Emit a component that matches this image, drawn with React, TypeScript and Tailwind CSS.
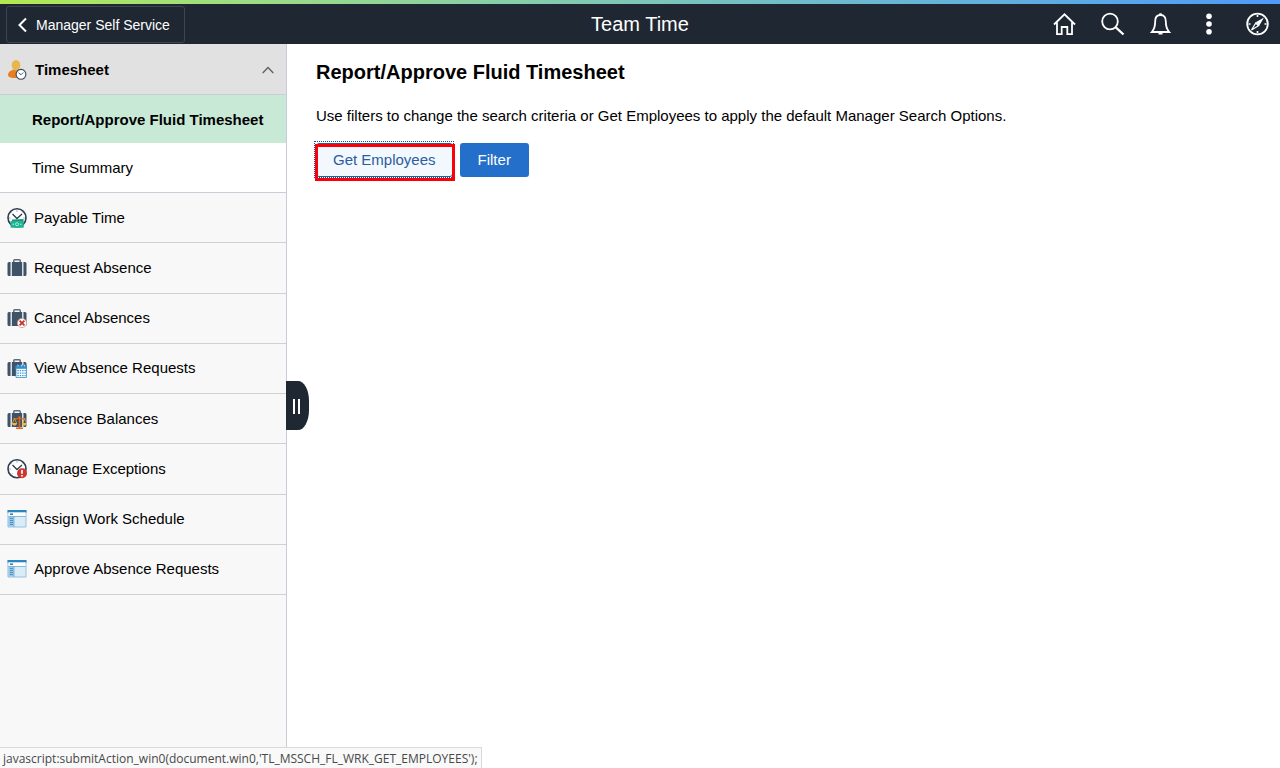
import { useState, type ReactNode } from "react"
import { clsx } from "clsx"

function PersonClockIcon() {
  return (
    <svg viewBox="0 0 20 20" className="h-5 w-5 shrink-0" aria-hidden="true">
      <path d="M1 15c0-3 3-5 6-5.500h4c2 .5 4 2 4 4v3c-2 1.200-4.500 1.500-7 1.500-3 0-7-.500-7-3z" fill="#e67e22" />
      <ellipse cx="9" cy="5.200" rx="4.300" ry="5.200" fill="#e8b54e" />
      <circle cx="14" cy="14.300" r="4.900" fill="#fff" stroke="#34495e" strokeWidth="1.100" />
      <path d="M11.500 12.800l2.500 2 2.300-2.300" fill="none" stroke="#34495e" strokeWidth="0.900" />
    </svg>
  )
}

function Clock() {
  return (
    <>
      <circle cx="10" cy="9.800" r="9" fill="#fff" stroke="#2c3e50" strokeWidth="1.600" />
      <path d="M5.500 6l4.500 4.500 5-4.500" fill="none" stroke="#2c3e50" strokeWidth="1.300" />
      <path d="M10 2.200v1.500M2.200 10h1.500M16.300 10h1.500M4.500 15.500l1-1M4.300 4.500l.7.700M15.700 4.500l-.7.700" stroke="#8a97a3" strokeWidth="0.900" />
    </>
  )
}

function PayableIcon() {
  return (
    <svg viewBox="0 0 20 20" className="h-5 w-5 shrink-0" aria-hidden="true">
      <Clock />
      <path d="M5 11.500l11.500-.5v8.500H4.500z" fill="#159c7f" />
      <path d="M3.500 13h13v6.500h-13z" fill="#1fb492" />
      <circle cx="10" cy="16.200" r="1.500" fill="none" stroke="#c9f2e6" strokeWidth="0.800" />
      <path d="M5.500 16.200h1.500M13 16.200h1.500" stroke="#c9f2e6" />
    </svg>
  )
}

function SuitcaseIcon({ children }: { children?: ReactNode }) {
  return (
    <svg viewBox="0 0 20 20" className="h-5 w-5 shrink-0" aria-hidden="true">
      <path d="M6.800 5V2.500q0-.8.8-.8h4.800q.8 0 .8.800V5" fill="none" stroke="#5d6d7e" strokeWidth="1.500" />
      <path d="M3.600 4v14H2Q.5 18 .5 16.500v-11Q.5 4 2 4zM16.400 4v14H18q1.500 0 1.500-1.500v-11Q19.500 4 18 4z" fill="#3f5367" />
      <path d="M5 4h10v14H5z" fill="#3f5367" />
      <path d="M4.300 4v14M15.700 4v14" stroke="#c3cbd3" strokeWidth="0.800" />
      {children}
    </svg>
  )
}

function CancelBadge() {
  return (
    <>
      <circle cx="15" cy="15" r="4.600" fill="#fff" stroke="#dd958f" strokeWidth="0.800" />
      <path d="M12.600 12.600l4.800 4.800M17.400 12.600l-4.800 4.800" stroke="#c8372d" strokeWidth="1.900" />
    </>
  )
}

function CalendarBadge() {
  return (
    <>
      <path d="M9 8h10.600v11.500H9z" fill="#fff" stroke="#2f8fd0" strokeWidth="0.800" />
      <path d="M8.600 7.500H20v3.300H8.600z" fill="#2f8fd0" />
      <path d="M11 6.500v2M14.300 6.500v2M17.600 6.500v2" stroke="#d6ebf8" strokeWidth="0.800" />
      <path d="M10.300 12.700h8.500M10.300 15.200h8.500M10.300 17.700h8.500" stroke="#3d9ad6" strokeWidth="1.300" strokeDasharray="1.500 0.900" />
    </>
  )
}

function ScalesBadge() {
  return (
    <>
      <path d="M12.500 7v12M9 19.200h7" stroke="#e0671c" strokeWidth="1.500" />
      <path d="M6.500 9.500q3 1.200 6-.8 3 2 6 .8" fill="none" stroke="#e0671c" strokeWidth="1.200" />
      <path d="M7.500 9.500l-2 4.500M7.500 9.500l2 4.500M17.500 9.500l-2 4.500M17.500 9.500l2 4.500" stroke="#e5ad3c" strokeWidth="0.800" />
      <path d="M4.800 14h5.400q-.5 2.800-2.700 2.800T4.800 14zM14.700 14h5.300q-.5 2.800-2.700 2.800T14.700 14z" fill="#efb73e" />
    </>
  )
}

function ExceptionIcon() {
  return (
    <svg viewBox="0 0 20 20" className="h-5 w-5 shrink-0" aria-hidden="true">
      <Clock />
      <circle cx="15" cy="14.300" r="5" fill="#d0342c" />
      <path d="M15 11v3.800M15 16v1.600" stroke="#fff" strokeWidth="1.700" />
    </svg>
  )
}

function WindowIcon() {
  return (
    <svg viewBox="0 0 20 20" className="h-5 w-5 shrink-0" aria-hidden="true">
      <path d="M1 1.500h18v16.500H1z" fill="#dcecf7" stroke="#8fc0e0" />
      <path d="M.5 1h19v2.500H.5z" fill="#2d85c0" />
      <path d="M1.500 3.500h17v3.500h-17z" fill="#fff" />
      <path d="M3 5.200h3" stroke="#2d85c0" strokeWidth="1.600" />
      <path d="M1.500 7.500h5.500v10H1.500z" fill="#9ac6e3" />
      <path d="M3 9.500h3M3 11.500h3M3 13.500h3M3 15.500h3" stroke="#3f8fc2" strokeWidth="0.900" />
      <path d="M7 7.500v10.500M1.500 7.500h17" stroke="#6badd6" strokeWidth="0.800" />
    </svg>
  )
}

const menuItems = [
  { label: "Payable Time", icon: <PayableIcon /> },
  { label: "Request Absence", icon: <SuitcaseIcon /> },
  { label: "Cancel Absences", icon: <SuitcaseIcon><CancelBadge /></SuitcaseIcon> },
  { label: "View Absence Requests", icon: <SuitcaseIcon><CalendarBadge /></SuitcaseIcon> },
  { label: "Absence Balances", icon: <SuitcaseIcon><ScalesBadge /></SuitcaseIcon> },
  { label: "Manage Exceptions", icon: <ExceptionIcon /> },
  { label: "Assign Work Schedule", icon: <WindowIcon /> },
  { label: "Approve Absence Requests", icon: <WindowIcon /> },
]

const headerActions = [
  {
    label: "Home",
    icon: <path d="M1 12.500L11.500 2.300 22 12.500M4 10.500v11.700h4.700V15h5.600v7.200H19V10.500" />,
  },
  {
    label: "Search",
    icon: (
      <>
        <circle cx="9" cy="9.500" r="7.800" />
        <path d="M14.800 15.300L22.500 22.500" strokeWidth="2.300" />
      </>
    ),
  },
  {
    label: "Notifications",
    icon: (
      <>
        <path d="M11.500 3c-3.800 0-5.300 2.700-5.300 6.200 0 5-.7 7.800-3.400 10.800h17.400c-2.700-3-3.400-5.800-3.400-10.800 0-3.500-1.500-6.200-5.300-6.200z" />
        <path d="M11.500 1.200v1.800M9.500 21.300h4" strokeWidth="2.400" />
      </>
    ),
  },
  {
    label: "Actions",
    icon: (
      <g fill="#fff" stroke="none">
        <circle cx="12" cy="4.200" r="2.800" />
        <circle cx="12" cy="12" r="2.800" />
        <circle cx="12" cy="19.800" r="2.800" />
      </g>
    ),
  },
  {
    label: "NavBar",
    icon: (
      <>
        <circle cx="12.500" cy="12" r="10.300" />
        <path d="M12.500 3v2M12.500 19v2M3.500 12h2M19.500 12h2" strokeWidth="1.600" />
        <path d="M19 5.500l-4.800 8.200-3.400-3.400z" fill="#fff" stroke="none" />
        <path d="M6.500 18l4.300-7 2.700 2.700z" strokeWidth="1.300" />
      </>
    ),
  },
]

export default function App() {
  const [open, setOpen] = useState(true)

  return (
    <div className="relative flex min-h-screen flex-col bg-white font-['Liberation_Sans',Arial,sans-serif] text-[15px] leading-5 text-black">
      <div className="h-1 bg-linear-to-r from-[#b2e94e] to-[#4f9af8]" />
      <header className="grid h-10 grid-cols-[1fr_auto_1fr] items-center bg-[#1e2732] text-white">
        <button className="ml-1.5 flex h-[37px] items-center gap-2 justify-self-start rounded-[3px] border border-[#3d4650] pt-px pr-3.5 pl-2.5 text-sm">
          <svg viewBox="0 0 11 16" className="h-4 w-[11px]" fill="none" stroke="#fff" strokeWidth="2" aria-hidden="true">
            <path d="M9 1.500L2.500 8 9 14.500" />
          </svg>
          Manager Self Service
        </button>
        <h1 className="text-xl">Team Time</h1>
        <nav className="flex items-center gap-6 justify-self-end pr-[11px]">
          {headerActions.map((action) => (
            <button key={action.label} aria-label={action.label}>
              <svg viewBox="0 0 24 24" className="h-6 w-6" fill="none" stroke="#fff" strokeWidth="1.800" aria-hidden="true">
                {action.icon}
              </svg>
            </button>
          ))}
        </nav>
      </header>

      <div className="flex flex-1">
        <aside className="relative w-[287px] shrink-0 border-r border-[#c9ced6] bg-[#f8f8f8]">
          <button
            onClick={() => setOpen(!open)}
            aria-expanded={open}
            className="flex h-[51px] w-full items-center border-b border-[#c9ced6] bg-[#e1e1e1] pt-0.5 pr-3 pl-[7px] text-left font-bold"
          >
            <PersonClockIcon />
            <span className="ml-2 flex-1">Timesheet</span>
            <svg viewBox="0 0 12 8" className={clsx("h-2 w-3", !open && "rotate-180")} fill="none" stroke="#5f5f5f" strokeWidth="1.300" aria-hidden="true">
              <path d="M.7 7L6 1.500 11.300 7" />
            </svg>
          </button>
          {open && (
            <div className="border-b border-[#c9ced6] bg-white">
              <a href="#report" className="flex h-12 items-center bg-[#c9e9d7] pt-0.5 pl-8 font-bold">
                Report/Approve Fluid Timesheet
              </a>
              <a href="#summary" className="flex h-[49px] items-center pl-8">
                Time Summary
              </a>
            </div>
          )}
          <nav className="grid min-h-[402px] auto-rows-fr">
            {menuItems.map((item) => (
              <a
                key={item.label}
                href="#item"
                className="flex items-center gap-[7px] border-b border-[#cdd2d9] pl-[7px]"
              >
                {item.icon}
                {item.label}
              </a>
            ))}
          </nav>
          <button
            aria-label="Collapse navigation"
            className="absolute top-[337px] -right-[23px] flex h-[49px] w-[23px] items-center justify-center gap-[3px] rounded-[0_11px_11px_0/0_20px_20px_0] bg-[#1e2732] pt-0.5 pr-0.5"
          >
            <span className="h-[15px] w-0.5 bg-white" />
            <span className="h-[15px] w-0.5 bg-white" />
          </button>
        </aside>

        <main className="flex-1 pt-4 pl-[29px]">
          <h2 className="text-xl leading-6 font-bold">Report/Approve Fluid Timesheet</h2>
          <p className="mt-[22px]">
            Use filters to change the search criteria or Get Employees to apply the default Manager Search Options.
          </p>
          <div className="mt-[17px] flex gap-[7px]">
            <button className="relative h-[34px] rounded-[3px] border border-[#2a5d9f] bg-[#f3f8fe] px-4 text-[#2a5d9f]">
              Get Employees
              <span className="absolute -top-[3px] -right-0.5 -bottom-0.5 -left-[3px] border border-dotted border-[#1e4f86]" />
              <span className="absolute top-0 -right-[3px] -bottom-[5px] -left-0.5 border-3 border-[#fb0007]" />
            </button>
            <button className="h-[34px] rounded-[3px] bg-[#246fc9] px-[18px] text-white">Filter</button>
          </div>
        </main>
      </div>

      <div className="absolute bottom-0 left-0 h-[21px] border-t border-r border-[#d9d9d9] bg-[#f9f9f9] px-[3px] pt-px font-['Open_Sans','Noto_Sans',sans-serif] text-xs leading-5 text-[#484848]">
        javascript:submitAction_win0(document.win0,'TL_MSSCH_FL_WRK_GET_EMPLOYEES');
      </div>
    </div>
  )
}
